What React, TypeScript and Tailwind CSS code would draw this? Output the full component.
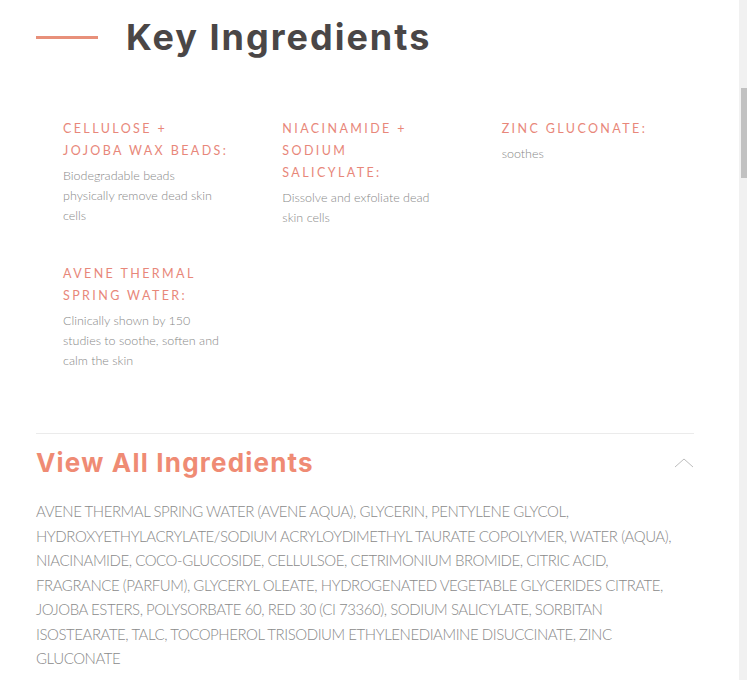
import React from "react";

const items = [
  { t: ["CELLULOSE +", "JOJOBA WAX BEADS:"], d: ["Biodegradable beads", "physically remove dead skin", "cells"] },
  { t: ["NIACINAMIDE +", "SODIUM", "SALICYLATE:"], d: ["Dissolve and exfoliate dead", "skin cells"] },
  { t: ["ZINC GLUCONATE:"], d: ["soothes"] },
  { t: ["AVENE THERMAL", "SPRING WATER:"], d: ["Clinically shown by 150", "studies to soothe, soften and", "calm the skin"] },
];

const lines = [
  "AVENE THERMAL SPRING WATER (AVENE AQUA), GLYCERIN, PENTYLENE GLYCOL,",
  "HYDROXYETHYLACRYLATE/SODIUM ACRYLOYDIMETHYL TAURATE COPOLYMER, WATER (AQUA),",
  "NIACINAMIDE, COCO-GLUCOSIDE, CELLULSOE, CETRIMONIUM BROMIDE, CITRIC ACID,",
  "FRAGRANCE (PARFUM), GLYCERYL OLEATE, HYDROGENATED VEGETABLE GLYCERIDES CITRATE,",
  "JOJOBA ESTERS, POLYSORBATE 60, RED 30 (CI 73360), SODIUM SALICYLATE, SORBITAN",
  "ISOSTEARATE, TALC, TOCOPHEROL TRISODIUM ETHYLENEDIAMINE DISUCCINATE, ZINC",
  "GLUCONATE",
];

export default function App() {
  return (
    <div className="relative w-[747px] h-[680px] overflow-hidden bg-white">
      <div className="w-[739px] pl-[36px] pr-[45px]">
        <div className="flex items-center h-[74px]">
          <div className="w-[62px] h-[3px] bg-[#e8907a]" />
          <h1 className="ml-[28px] text-[36px] leading-none font-bold text-[#4a4646] tracking-[2px]" style={{ fontFamily: "Inter, 'Open Sans', sans-serif" }}>
            Key Ingredients
          </h1>
        </div>
        <div className="grid grid-cols-3 gap-y-[35px] mt-[44px]" style={{ fontFamily: "Lato, 'Noto Sans', sans-serif" }}>
          {items.map((it, i) => (
            <div key={i} className="pl-[27px]">
              <div className="text-[12.5px] leading-[22px] tracking-[2.4px] text-[#e8877a] font-normal whitespace-nowrap">
                {it.t.map((l, j) => (
                  <div key={j}>{l}</div>
                ))}
              </div>
              <div className="mt-[4px] text-[12.5px] leading-[20px] text-[#888888] font-light whitespace-nowrap">
                {it.d.map((l, j) => (
                  <div key={j}>{l}</div>
                ))}
              </div>
            </div>
          ))}
        </div>
        <div className="mt-[62px] h-px bg-[#ebebeb]" />
        <div className="flex items-center justify-between pt-[6px] h-[52px]">
          <h2 className="text-[26px] leading-[32px] font-bold text-[#ef8b74] tracking-[1.2px]" style={{ fontFamily: "Inter, 'Open Sans', sans-serif" }}>
            View All Ingredients
          </h2>
          <svg width="20" height="12" viewBox="0 0 20 12">
            <polyline points="1,10 10,2 19,10" fill="none" stroke="#bdbdbd" strokeWidth="1" />
          </svg>
        </div>
        <div className="mt-[13px] text-[15px] leading-[24.5px] tracking-[-0.45px] text-[#8a8a8a] font-light" style={{ fontFamily: "Lato, 'Noto Sans', sans-serif" }}>
          {lines.map((l, i) => (
            <div key={i} className="whitespace-nowrap">{l}</div>
          ))}
        </div>
      </div>
      <div className="absolute top-0 right-0 w-[8px] h-full bg-[#f1f1f1]">
        <div className="absolute top-[88px] left-[2px] right-0 h-[90px] bg-[#c1c1c1]" />
      </div>
    </div>
  );
}
